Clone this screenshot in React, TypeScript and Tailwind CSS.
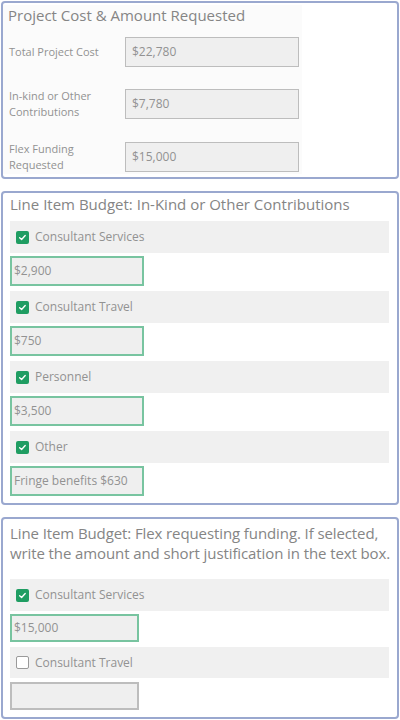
import React from 'react';

const font = { fontFamily: '"Open Sans", "Liberation Sans", sans-serif' };

interface CostRow {
    label: string[];
    value: string;
}

const costRows: CostRow[] = [
    { label: ['Total Project Cost'], value: '$22,780' },
    { label: ['In-kind or Other', 'Contributions'], value: '$7,780' },
    { label: ['Flex Funding', 'Requested'], value: '$15,000' },
];

const inKindItems = [
    { name: 'Consultant Services', value: '$2,900' },
    { name: 'Consultant Travel', value: '$750' },
    { name: 'Personnel', value: '$3,500' },
    { name: 'Other', value: 'Fringe benefits $630' },
];

const Check = ({ checked }: { checked: boolean }) =>
    checked ? (
        <span className="flex items-center justify-center w-[13px] h-[13px] rounded-[2px] bg-[#1f9d62]">
            <svg viewBox="0 0 12 12" className="w-[9px] h-[9px]">
                <path d="M2.2 6.3 L4.8 8.6 L9.6 3.4" fill="none" stroke="white" strokeWidth="1.8" strokeLinecap="round" strokeLinejoin="round" />
            </svg>
        </span>
    ) : (
        <span className="w-[13px] h-[13px] rounded-[2px] border border-[#9a9a9a] bg-white"></span>
    );

const CheckRow = ({ name, checked, h = 'h-[32px]' }: { name: string; checked: boolean; h?: string }) => (
    <div className={`ml-[7px] w-[379px] ${h} bg-[#f0f0f0] flex items-center pl-[6px] gap-[6px]`}>
        <Check checked={checked} />
        <span className="text-[12px] text-[#929292]">{name}</span>
    </div>
);

const App = () => {
    return (
        <div className="w-[400px] h-[720px] bg-white pt-[1px] px-[1px] flex flex-col gap-[12px]" style={font}>
            {/* Project cost */}
            <div className="h-[178px] border-2 border-[#9aa8cf] rounded-[4px] pt-[2px] pb-[8px]">
                <div className="w-[299px] bg-[#fbfbfb] pb-[1px]">
                    <h2 className="text-[15px] leading-[20px] text-[#858585] pl-[5px]">Project Cost &amp; Amount Requested</h2>
                    <div className="flex flex-col gap-[21px] mt-[12px]">
                        {costRows.map(row => (
                            <div key={row.value} className="flex items-center">
                                <div className="w-[122px] pl-[6px] text-[11px] leading-[16px] text-[#929292]">
                                    {row.label.map(l => (
                                        <div key={l}>{l}</div>
                                    ))}
                                </div>
                                <div className="w-[174px] h-[30px] bg-[#efefef] border-[1.5px] border-[#bdbdbd] flex items-center pl-[6px] text-[12px] text-[#929292]">
                                    {row.value}
                                </div>
                            </div>
                        ))}
                    </div>
                </div>
            </div>

            {/* In-kind */}
            <div className="h-[314px] border-2 border-[#9aa8cf] rounded-[4px] pt-[1px]">
                <h2 className="text-[15px] leading-[20px] text-[#858585] pl-[7px]">Line Item Budget: In-Kind or Other Contributions</h2>
                <div className="mt-[7px] flex flex-col">
                    {inKindItems.map(item => (
                        <div key={item.name} className="flex flex-col gap-[3px] mb-[5px]">
                            <CheckRow name={item.name} checked />
                            <div className="ml-[7px] w-[134px] h-[30px] bg-[#efefef] border-2 border-[#78c4a0] flex items-center pl-[2px] text-[12px] text-[#929292]">
                                {item.value}
                            </div>
                        </div>
                    ))}
                </div>
            </div>

            {/* Flex funding */}
            <div className="h-[202px] border-2 border-[#9aa8cf] rounded-[4px] pt-[4px]">
                <h2 className="text-[15px] leading-[20px] text-[#858585] pl-[7px] tracking-[-0.1px]">
                    Line Item Budget: Flex requesting funding. If selected, write the amount and short justification in the text box.
                </h2>
                <div className="mt-[16px] flex flex-col">
                    <CheckRow name="Consultant Services" checked />
                    <div className="mt-[3px] ml-[7px] w-[129px] h-[28px] bg-[#efefef] border-2 border-[#78c4a0] flex items-center pl-[2px] text-[12px] text-[#929292]">
                        $15,000
                    </div>
                    <div className="mt-[5px]">
                        <CheckRow name="Consultant Travel" checked={false} h="h-[31px]" />
                    </div>
                    <div className="mt-[4px] ml-[7px] w-[129px] h-[28px] bg-[#efefef] border-2 border-[#bdbdbd]"></div>
                </div>
            </div>
        </div>
    );
};

export default App;
